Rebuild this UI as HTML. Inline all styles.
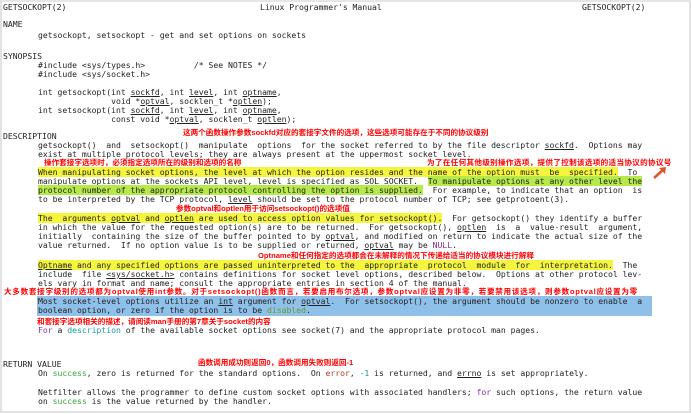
<!DOCTYPE html>
<html><head><meta charset="utf-8"><style>
html,body{margin:0;padding:0;background:#fff;}
body{width:691px;height:414px;position:relative;overflow:hidden;border:0;}
#frame{position:absolute;left:0;top:0;width:687px;height:409px;border:2px solid #e2e2e2;border-top:2px solid #e6e6e6;}
.l{position:absolute;left:3px;white-space:pre;font-family:"DejaVu Sans Mono","Liberation Mono",monospace;font-size:8.15px;line-height:9px;height:9px;color:#222;letter-spacing:-0.02px;}
.b{left:38px;}
.c{position:absolute;white-space:nowrap;font-family:"Liberation Sans","Noto Sans CJK SC",sans-serif;font-size:7.6px;line-height:8px;color:#f00;font-weight:bold;}
u{text-decoration:underline;}
.y{background:#f4f53c;}
.g{background:#b6ea4a;}
.pu{color:#8a2e9a}.gr{color:#3aa83a}.te{color:#1a9a9a}.br{color:#b03a2a}.ol{color:#6a9a2a}
#blue{position:absolute;left:37px;top:296px;width:615px;height:20px;background:#8ec0ea;}
</style></head><body>
<div id="frame"></div>
<div class="l" style="top:3px">GETSOCKOPT(2)</div>
<div class="l" style="top:3px;left:260px">Linux Programmer's Manual</div>
<div class="l" style="top:3px;left:582px">GETSOCKOPT(2)</div>
<div class="l" style="top:20px">NAME</div>
<div class="l b" style="top:31px">getsockopt, setsockopt - get and set options on sockets</div>
<div class="l" style="top:52px">SYNOPSIS</div>
<div class="l b" style="top:61px">#include &lt;sys/types.h&gt;          /* See NOTES */</div>
<div class="l b" style="top:70px">#include &lt;sys/socket.h&gt;</div>
<div class="l b" style="top:88px">int getsockopt(int <u>sockfd</u>, int <u>level</u>, int <u>optname</u>,</div>
<div class="l b" style="top:97px">               void *<u>optval</u>, socklen_t *<u>optlen</u>);</div>
<div class="l b" style="top:106px">int setsockopt(int <u>sockfd</u>, int <u>level</u>, int <u>optname</u>,</div>
<div class="l b" style="top:115px">               const void *<u>optval</u>, socklen_t <u>optlen</u>);</div>

<div class="l" style="top:132px">DESCRIPTION</div>
<div class="c" style="left:183px;top:129px">这两个函数操作参数sockfd对应的套接字文件的选项，这些选项可能存在于不同的协议级别</div>
<div class="l b" style="top:141px">getsockopt()  and  setsockopt()  manipulate  options  for the socket referred to by the file descriptor <u>sockfd</u>.  Options may</div>
<div class="l b" style="top:150px">exist at multiple protocol levels; they are always present at the uppermost socket level.</div>
<div class="c" style="left:44px;top:159px">操作套接字选项时，必须指定选项所在的级别和选项的名称</div>
<div class="c" style="left:427px;top:159px;letter-spacing:0.3px">为了在任何其他级别操作选项，提供了控制该选项的适当协议的协议号</div>
<svg style="position:absolute;left:652px;top:166px" width="16" height="14" viewBox="0 0 16 14"><path d="M2 12 L12 3" stroke="#e0552a" stroke-width="2.6" fill="none"/><path d="M7 2 L14 1 L13 8 Z" fill="#e0552a"/></svg>
<div class="l b" style="top:168px"><span class="y">When manipulating socket options, the level at which the option resides and the name of the option must  be  specified.</span>  To</div>
<div class="l b" style="top:177px">manipulate options at the sockets API level, <u>level</u> is specified as SOL_SOCKET.  <span class="g">To manipulate options at any other level the</span></div>
<div class="l b" style="top:186px"><span class="g">protocol number of the appropriate protocol controlling the option is supplied.</span>  For example, to indicate that an option  is</div>
<div class="l b" style="top:195px">to be interpreted by the TCP protocol, <u>level</u> should be set to the protocol number of TCP; see getprotoent(3).</div>
<div class="c" style="left:176px;top:205px">参数optval和optlen用于访问setsockopt()的选项值</div>
<div class="l b" style="top:214px"><span class="y">The  arguments <u>optval</u> and <u>optlen</u> are used to access option values for setsockopt().</span>  For getsockopt() they identify a buffer</div>
<div class="l b" style="top:223px">in which the value for the requested option(s) are to be returned.  For getsockopt(), <u>optlen</u>  is  a  value-result  argument,</div>
<div class="l b" style="top:232px">initially  containing the size of the buffer pointed to by <u>optval</u>, and modified on return to indicate the actual size of the</div>
<div class="l b" style="top:241px">value returned.  If no option value is to be supplied or returned, <u>optval</u> may be <span class="pu">NULL</span>.</div>
<div class="c" style="left:258px;top:252px">Optname和任何指定的选项都会在未解释的情况下传递给适当的协议模块进行解释</div>
<div class="l b" style="top:261px"><span class="y"><u>Optname</u> and any specified options are passed uninterpreted to the  appropriate  protocol  module  for  interpretation.</span>  The</div>
<div class="l b" style="top:270px">include  file <u>&lt;sys/socket.h&gt;</u> contains definitions for socket level options, described below.  Options at other protocol lev-</div>
<div class="l b" style="top:279px">els vary in format and name; consult the appropriate entries in section 4 of the manual.</div>
<div class="c" style="left:4px;top:288px;letter-spacing:0.7px">大多数套接字级别的选项都为optval使用int参数。对于setsockopt()函数而言，若要启用布尔选项，参数optval应设置为非零，若要禁用该选项，则参数optval应设置为零</div>
<div id="blue"></div>
<div class="l b" style="top:297px">Most socket-level options utilize an <u>int</u> argument for <u>optval</u>.  For setsockopt(), the argument should be nonzero to enable  a</div>
<div class="l b" style="top:306px">boolean option, or zero if the option is to be <span class="ol">disabled</span>.</div>
<div class="c" style="left:37px;top:318px">和套接字选项相关的描述，请阅读man手册的第7章关于socket的内容</div>
<div class="l b" style="top:326px"><span class="pu">For</span> a <span class="te">description</span> of the available socket options see socket(7) and the appropriate protocol man pages.</div>

<div class="l" style="top:360px">RETURN VALUE</div>
<div class="c" style="left:198px;top:359px">函数调用成功则返回0，函数调用失败则返回-1</div>
<div class="l b" style="top:369px">On <span class="gr">success</span>, zero is returned for the standard options.  On <span class="br">error</span>, <span class="te">-1</span> is returned, and <u>errno</u> is set appropriately.</div>
<div class="l b" style="top:388px">Netfilter allows the programmer to define custom socket options with associated handlers; <span class="pu">for</span> such options, the return value</div>
<div class="l b" style="top:397px">on <span class="gr">success</span> is the value returned by the handler.</div>
</body></html>
